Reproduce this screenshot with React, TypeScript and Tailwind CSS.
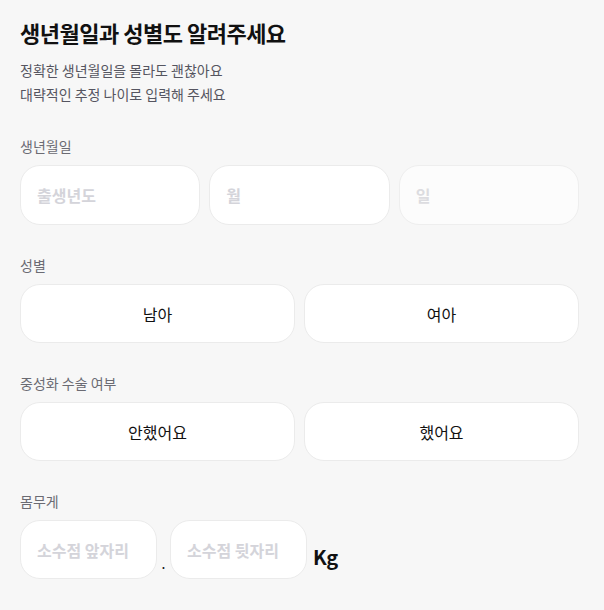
import React, { useState } from 'react';

const font = { fontFamily: '"Noto Sans CJK KR", "Noto Sans", sans-serif' };

function Label({ children }: { children: React.ReactNode }) {
  return <p className="text-[14px] leading-[20px] text-[#6b6b73] mb-[9px]">{children}</p>;
}

function ChoiceRow({ options }: { options: string[] }) {
  const [picked, setPicked] = useState<string | null>(null);
  return (
    <div className="flex gap-[9px]">
      {options.map((o) => (
        <button
          key={o}
          onClick={() => setPicked(o)}
          className={
            'flex-1 h-[59px] rounded-[20px] border bg-white text-[16px] text-[#111111] ' +
            (picked === o ? 'border-[#3b82f6]' : 'border-[#ebebeb]')
          }
        >
          {o}
        </button>
      ))}
    </div>
  );
}

export default function App() {
  return (
    <div className="min-h-[610px] w-[604px] bg-[#f7f7f7] pl-[20px] pr-[25px] pt-[16px]" style={font}>
      {/* Header */}
      <h1 className="text-[22px] leading-[32px] font-bold text-[#111111] tracking-[-0.5px]">
        생년월일과 성별도 알려주세요
      </h1>
      <p className="mt-[10px] text-[14px] leading-[24px] text-[#555560]">
        정확한 생년월일을 몰라도 괜찮아요
        <br />
        대략적인 추정 나이로 입력해 주세요
      </p>

      {/* Birth date */}
      <div className="mt-[30px]">
        <Label>생년월일</Label>
        <div className="flex gap-[9px]">
          <input
            placeholder="출생년도"
            className="flex-1 min-w-0 h-[60px] rounded-[20px] border border-[#ebebeb] bg-white px-[16px] text-[16px] font-bold placeholder:text-[#d4d4da] outline-none"
          />
          <input
            placeholder="월"
            className="flex-1 min-w-0 h-[60px] rounded-[20px] border border-[#ebebeb] bg-white px-[16px] text-[16px] font-bold placeholder:text-[#d4d4da] outline-none"
          />
          <input
            placeholder="일"
            disabled
            className="flex-1 min-w-0 h-[60px] rounded-[20px] border border-[#eeeeee] bg-[#fcfcfc] px-[16px] text-[16px] font-bold placeholder:text-[#dcdce0] outline-none"
          />
        </div>
      </div>

      {/* Gender */}
      <div className="mt-[30px]">
        <Label>성별</Label>
        <ChoiceRow options={['남아', '여아']} />
      </div>

      {/* Neutered */}
      <div className="mt-[30px]">
        <Label>중성화 수술 여부</Label>
        <ChoiceRow options={['안했어요', '했어요']} />
      </div>

      {/* Weight */}
      <div className="mt-[30px]">
        <Label>몸무게</Label>
        <div className="flex items-end">
          <input
            placeholder="소수점 앞자리"
            className="w-[137px] h-[59px] rounded-[20px] border border-[#ebebeb] bg-white px-[16px] text-[16px] font-bold placeholder:text-[#d4d4da] outline-none"
          />
          <span className="w-[13px] text-center text-[14px] leading-[20px] text-[#111111] mb-[6px]">.</span>
          <input
            placeholder="소수점 뒷자리"
            className="w-[137px] h-[59px] rounded-[20px] border border-[#ebebeb] bg-white px-[16px] text-[16px] font-bold placeholder:text-[#d4d4da] outline-none"
          />
          <span className="ml-[6px] mb-[8px] text-[20px] leading-[28px] font-bold text-[#111111] tracking-[-0.5px]">Kg</span>
        </div>
      </div>
    </div>
  );
}
